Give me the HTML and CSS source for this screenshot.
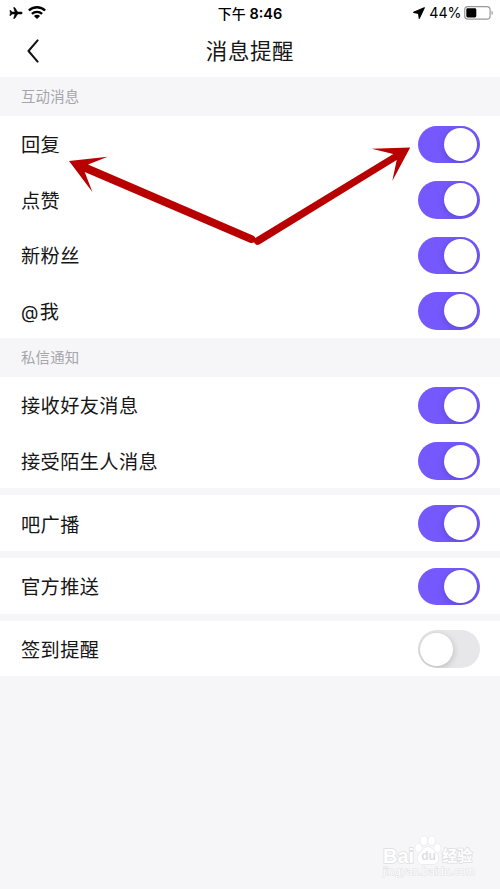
FILE: index.html
```
<!DOCTYPE html>
<html lang="zh-CN">
<head>
  <meta charset="UTF-8">
  <meta name="viewport" content="width=device-width, initial-scale=1.0">
  <title>消息提醒</title>
  <link rel="stylesheet" href="styles.css">
</head>
<body>
  <header>
    <div class="status">
      <div class="status-left">
        <svg width="14" height="12" viewBox="0 0 14 12">
          <path d="M13.3 6c0-.6-.7-1-1.500-1H8.700L5.800.6H4.600L6 5H3L1.800 3.500H.8L1.400 6 .8 8.500h1L3 7h3l-1.400 4.400h1.200L8.700 7h3.100c.8 0 1.500-.4 1.500-1z" stroke="#000" stroke-width=".5"/>
        </svg>
        <svg width="18" height="13" viewBox="0 0 18 13">
          <g fill="none" stroke="#000" stroke-width="2.4">
            <path d="M.9 4.500C5.400.1 12.600.1 17.100 4.500"/>
            <path d="M3.900 7.900c2.900-2.700 7.300-2.700 10.200 0"/>
          </g>
          <path d="M5.900 9.900c1.800-1.500 4.400-1.500 6.200 0L9 12.900z"/>
        </svg>
      </div>
      <span class="time">下午 <b>8:46</b></span>
      <div class="status-right">
        <svg width="12" height="12" viewBox="0 0 12 12">
          <path d="M11.300.8L.7 5.300l4.900 1.100.7 4.900z" stroke="#000" stroke-width="1.200" stroke-linejoin="round"/>
        </svg>
        <span>44%</span>
        <svg class="battery" width="30" height="14" viewBox="0 0 30 14">
          <rect x=".7" y=".7" width="25.4" height="12.4" rx="3.2" fill="none" stroke="#999" stroke-width="1.2"/>
          <rect x="2.3" y="2.3" width="10" height="9.2" rx="1.4"/>
          <path d="M27.6 4.7c1.6.6 1.6 3.8 0 4.4z" fill="#999"/>
        </svg>
      </div>
    </div>
    <div class="title-bar">
      <svg class="back" width="13" height="24" viewBox="0 0 13 24">
        <path d="M10.600 1.400L1.500 12l9.100 10.600" fill="none" stroke="#111" stroke-width="2" stroke-linecap="round" stroke-linejoin="round"/>
      </svg>
      <h1>消息提醒</h1>
    </div>
  </header>

  <main>
    <h2>互动消息</h2>
    <section>
      <label>回复<i class="switch on"></i></label>
      <label>点赞<i class="switch on"></i></label>
      <label>新粉丝<i class="switch on"></i></label>
      <label><span><span class="at">@</span>我</span><i class="switch on"></i></label>
    </section>
    <h2>私信通知</h2>
    <section>
      <label>接收好友消息<i class="switch on"></i></label>
      <label>接受陌生人消息<i class="switch on"></i></label>
    </section>
    <section class="single">
      <label>吧广播<i class="switch on"></i></label>
    </section>
    <section class="single">
      <label>官方推送<i class="switch on"></i></label>
    </section>
    <section class="single">
      <label>签到提醒<i class="switch"></i></label>
    </section>
  </main>

  <svg class="arrows" width="500" height="300" viewBox="0 0 500 300">
    <path d="M69 161l38.8-4.2L88 164.6l165.500 71.200a3.900 3.900 0 0 1-3 7.100L84.700 172l7.700 20z"/>
    <path d="M410.200 147.500l-38.500 1.200 21.600 5.400-137.600 83.600a3.800 3.800 0 0 0 4 6.500l137-84.200-4.400 21z"/>
  </svg>

  <div class="watermark">
    <div class="brand">
      <span class="bai">Bai</span>
      <span class="paw">
        <svg width="28" height="30" viewBox="0 0 28 30">
          <ellipse cx="4.5" cy="13" rx="3.300" ry="4"/>
          <ellipse cx="10" cy="5.600" rx="3.400" ry="4.400"/>
          <ellipse cx="17.600" cy="5.600" rx="3.400" ry="4.400"/>
          <ellipse cx="23.400" cy="13" rx="3.300" ry="4"/>
          <path d="M14 12c-4 0-5.600 4-8.200 6.600-4.400 4.500-2 10.400 2.600 10.400h11.200c4.600 0 7-5.900 2.600-10.400C19.600 16 18 12 14 12z"/>
        </svg>
        <span class="du">du</span>
      </span>
      <span class="jy">经验</span>
    </div>
    <div class="url">jingyan.baidu.com</div>
  </div>
</body>
</html>
```
FILE: styles.css
```
* {
  box-sizing: border-box;
}
body {
  margin: 0;
  min-height: 889px;
  position: relative;
  background: #f6f6f9;
  color: #161616;
  font-family: Inter, "Noto Sans CJK SC", sans-serif;
}
header {
  height: 77px;
  background: #fff;
}
.status {
  display: grid;
  grid-template-columns: 1fr auto 1fr;
  align-items: center;
  height: 25px;
  padding: 0 6px 0 9px;
  color: #000;
}
.status-left {
  display: flex;
  align-items: center;
  gap: 5px;
  margin-left: -0.5px;
}
.status-right {
  display: flex;
  align-items: center;
  justify-content: flex-end;
  gap: 4.5px;
  font-size: 14.2px;
}
.battery {
  margin-left: -2px;
}
.time {
  margin-left: -3px;
  font-size: 14px;
  font-weight: 500;
}
.time b {
  font-size: 14.5px;
  font-weight: 600;
}
.title-bar {
  display: grid;
  grid-template-columns: 40px 1fr 40px;
  align-items: center;
  height: 52px;
}
.back {
  margin-left: 27px;
}
h1 {
  margin: -4px 0 0;
  font-size: 21.5px;
  font-weight: 400;
  letter-spacing: 0.6px;
  text-align: center;
}
h2 {
  margin: 0;
  height: 39px;
  padding-left: 21px;
  font-size: 14.4px;
  font-weight: 400;
  line-height: 39px;
  letter-spacing: 0.2px;
  color: #a5a5aa;
}
section {
  background: #fff;
}
.single {
  margin-top: 7.2px;
}
label {
  display: flex;
  align-items: center;
  justify-content: space-between;
  height: 55.55px;
  padding: 1px 20.5px 0 21px;
  font-family: "Noto Sans CJK SC", sans-serif;
  font-size: 19.2px;
  letter-spacing: 0.4px;
}
.at {
  margin-right: 1px;
  font-family: Inter, sans-serif;
  font-size: 18px;
}
.switch {
  display: flex;
  overflow: hidden;
  width: 61.5px;
  height: 37.5px;
  padding: 2.3px;
  border-radius: 19px;
  background: #e7e7e9;
}
.switch::before {
  content: "";
  width: 33px;
  height: 33px;
  border-radius: 50%;
  background: #fff;
  box-shadow: 0 2px 7px rgba(0, 0, 0, 0.2);
}
.switch.on {
  justify-content: flex-end;
  background: #7559ff;
}
.arrows {
  position: absolute;
  top: 0;
  left: 0;
  fill: #b90000;
}
.watermark {
  position: absolute;
  top: 835px;
  left: 383px;
  width: 92px;
  color: #fff;
  -webkit-text-stroke: 1.6px #dedee1;
  paint-order: stroke fill;
}
.brand {
  display: flex;
  align-items: flex-end;
  height: 30px;
}
.bai {
  font: bold 20px/22px "Liberation Sans", sans-serif;
  margin-bottom: -2px;
}
.paw {
  position: relative;
  height: 30px;
}
.paw svg {
  fill: #fff;
  stroke: #dedee1;
  stroke-width: 0.8px;
}
.du {
  position: absolute;
  top: 14px;
  left: 7px;
  font: bold 12px/14px "Liberation Sans", sans-serif;
  color: #dedee2;
  -webkit-text-stroke: 0;
}
.jy {
  font: bold 15px/20px "Noto Sans CJK SC", sans-serif;
}
.url {
  font: 11px/12px "Liberation Sans", sans-serif;
  letter-spacing: 0.2px;
  -webkit-text-stroke-width: 1px;
}
```
